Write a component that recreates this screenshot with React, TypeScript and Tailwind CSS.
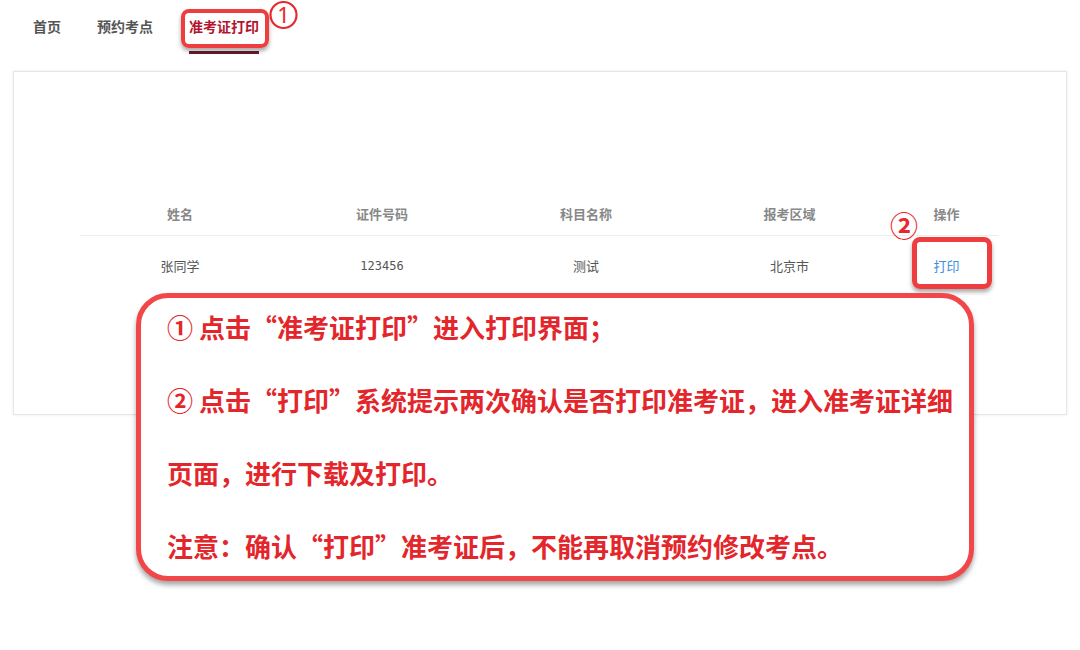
import React from "react";

const cols = [
  { h: "姓名", v: "张同学", w: "w-[200px]" },
  { h: "证件号码", v: "123456", w: "w-[204px]" },
  { h: "科目名称", v: "测试", w: "w-[204px]" },
  { h: "报考区域", v: "北京市", w: "w-[203px]" },
];

export default function App() {
  const font = { fontFamily: '"Microsoft YaHei", "Noto Sans CJK SC", "Noto Sans", sans-serif' };
  return (
    <div className="relative w-[1080px] h-[650px] bg-white overflow-hidden" style={font}>
      {/* Nav */}
      <nav className="flex gap-[36px] pl-[33px] text-[14px] font-bold">
        <div className="pt-[18px] pb-[17px] leading-[16px] text-[#555] border-b-[3px] border-transparent">首页</div>
        <div className="pt-[18px] pb-[17px] leading-[16px] text-[#555] border-b-[3px] border-transparent">预约考点</div>
        <div className="pt-[18px] pb-[17px] leading-[16px] text-[#b3152f] border-b-[3px] border-[#6e1a28]">准考证打印</div>
      </nav>

      {/* Card */}
      <div className="mx-[13px] mt-[17px] h-[344px] border border-[#e6e6e6] shadow-[0_0_3px_rgba(0,0,0,0.08)] bg-white pt-[120px] pl-[66px]">
        <div className="w-[918px] text-[13px]">
          <div className="flex h-[44px] items-center border-b border-[#ececec] text-[#888] font-bold">
            {cols.map((c) => (
              <div key={c.h} className={`${c.w} text-center`}>{c.h}</div>
            ))}
            <div className="flex-1 text-center pl-[4px]">操作</div>
          </div>
          <div className="flex h-[60px] items-center text-[#555]">
            {cols.map((c) => (
              <div key={c.h} className={`${c.w} text-center`} style={c.v === "123456" ? { fontFamily: '"DejaVu Sans Mono", monospace', fontSize: "12px" } : undefined}>{c.v}</div>
            ))}
            <div className="flex-1 text-center pl-[4px] text-[#3d8fe0]">打印</div>
          </div>
        </div>
      </div>

      {/* Annotation ① */}
      <div className="absolute left-[181px] top-[9px] w-[88px] h-[39px] border-[4px] border-[#ee3d3f] rounded-[8px] shadow-[0_3px_4px_rgba(0,0,0,0.35)]" />
      <svg className="absolute left-[268px] top-0" width="32" height="31" viewBox="0 0 32 31">
        <circle cx="15.5" cy="15" r="13" fill="none" stroke="#e8292b" strokeWidth="2.2" />
        <text x="15.5" y="23" textAnchor="middle" fontSize="22" fill="#e8292b" fontFamily="Noto Sans, sans-serif">1</text>
      </svg>

      {/* Annotation ② */}
      <div className="absolute left-[890px] top-[208px] text-[28px] leading-[34px] font-bold text-[#e8292b]">②</div>
      <div className="absolute left-[912px] top-[237px] w-[80px] h-[52px] border-[5px] border-[#ee3d3f] rounded-[8px] shadow-[0_3px_4px_rgba(0,0,0,0.35)]" />

      {/* Callout */}
      <div className="absolute left-[136px] top-[293px] w-[838px] h-[288px] border-[5px] border-[#f24749] rounded-[32px] bg-white shadow-[0_4px_5px_rgba(0,0,0,0.35)] pl-[26px] pt-[13px]">
        <div className="flex flex-col gap-[41px] text-[26px] leading-[32px] font-bold text-[#e3262b] whitespace-nowrap">
          <div>① 点击“准考证打印”进入打印界面；</div>
          <div>② 点击“打印”系统提示两次确认是否打印准考证，进入准考证详细</div>
          <div>页面，进行下载及打印。</div>
          <div>注意：确认“打印”准考证后，不能再取消预约修改考点。</div>
        </div>
      </div>
    </div>
  );
}
